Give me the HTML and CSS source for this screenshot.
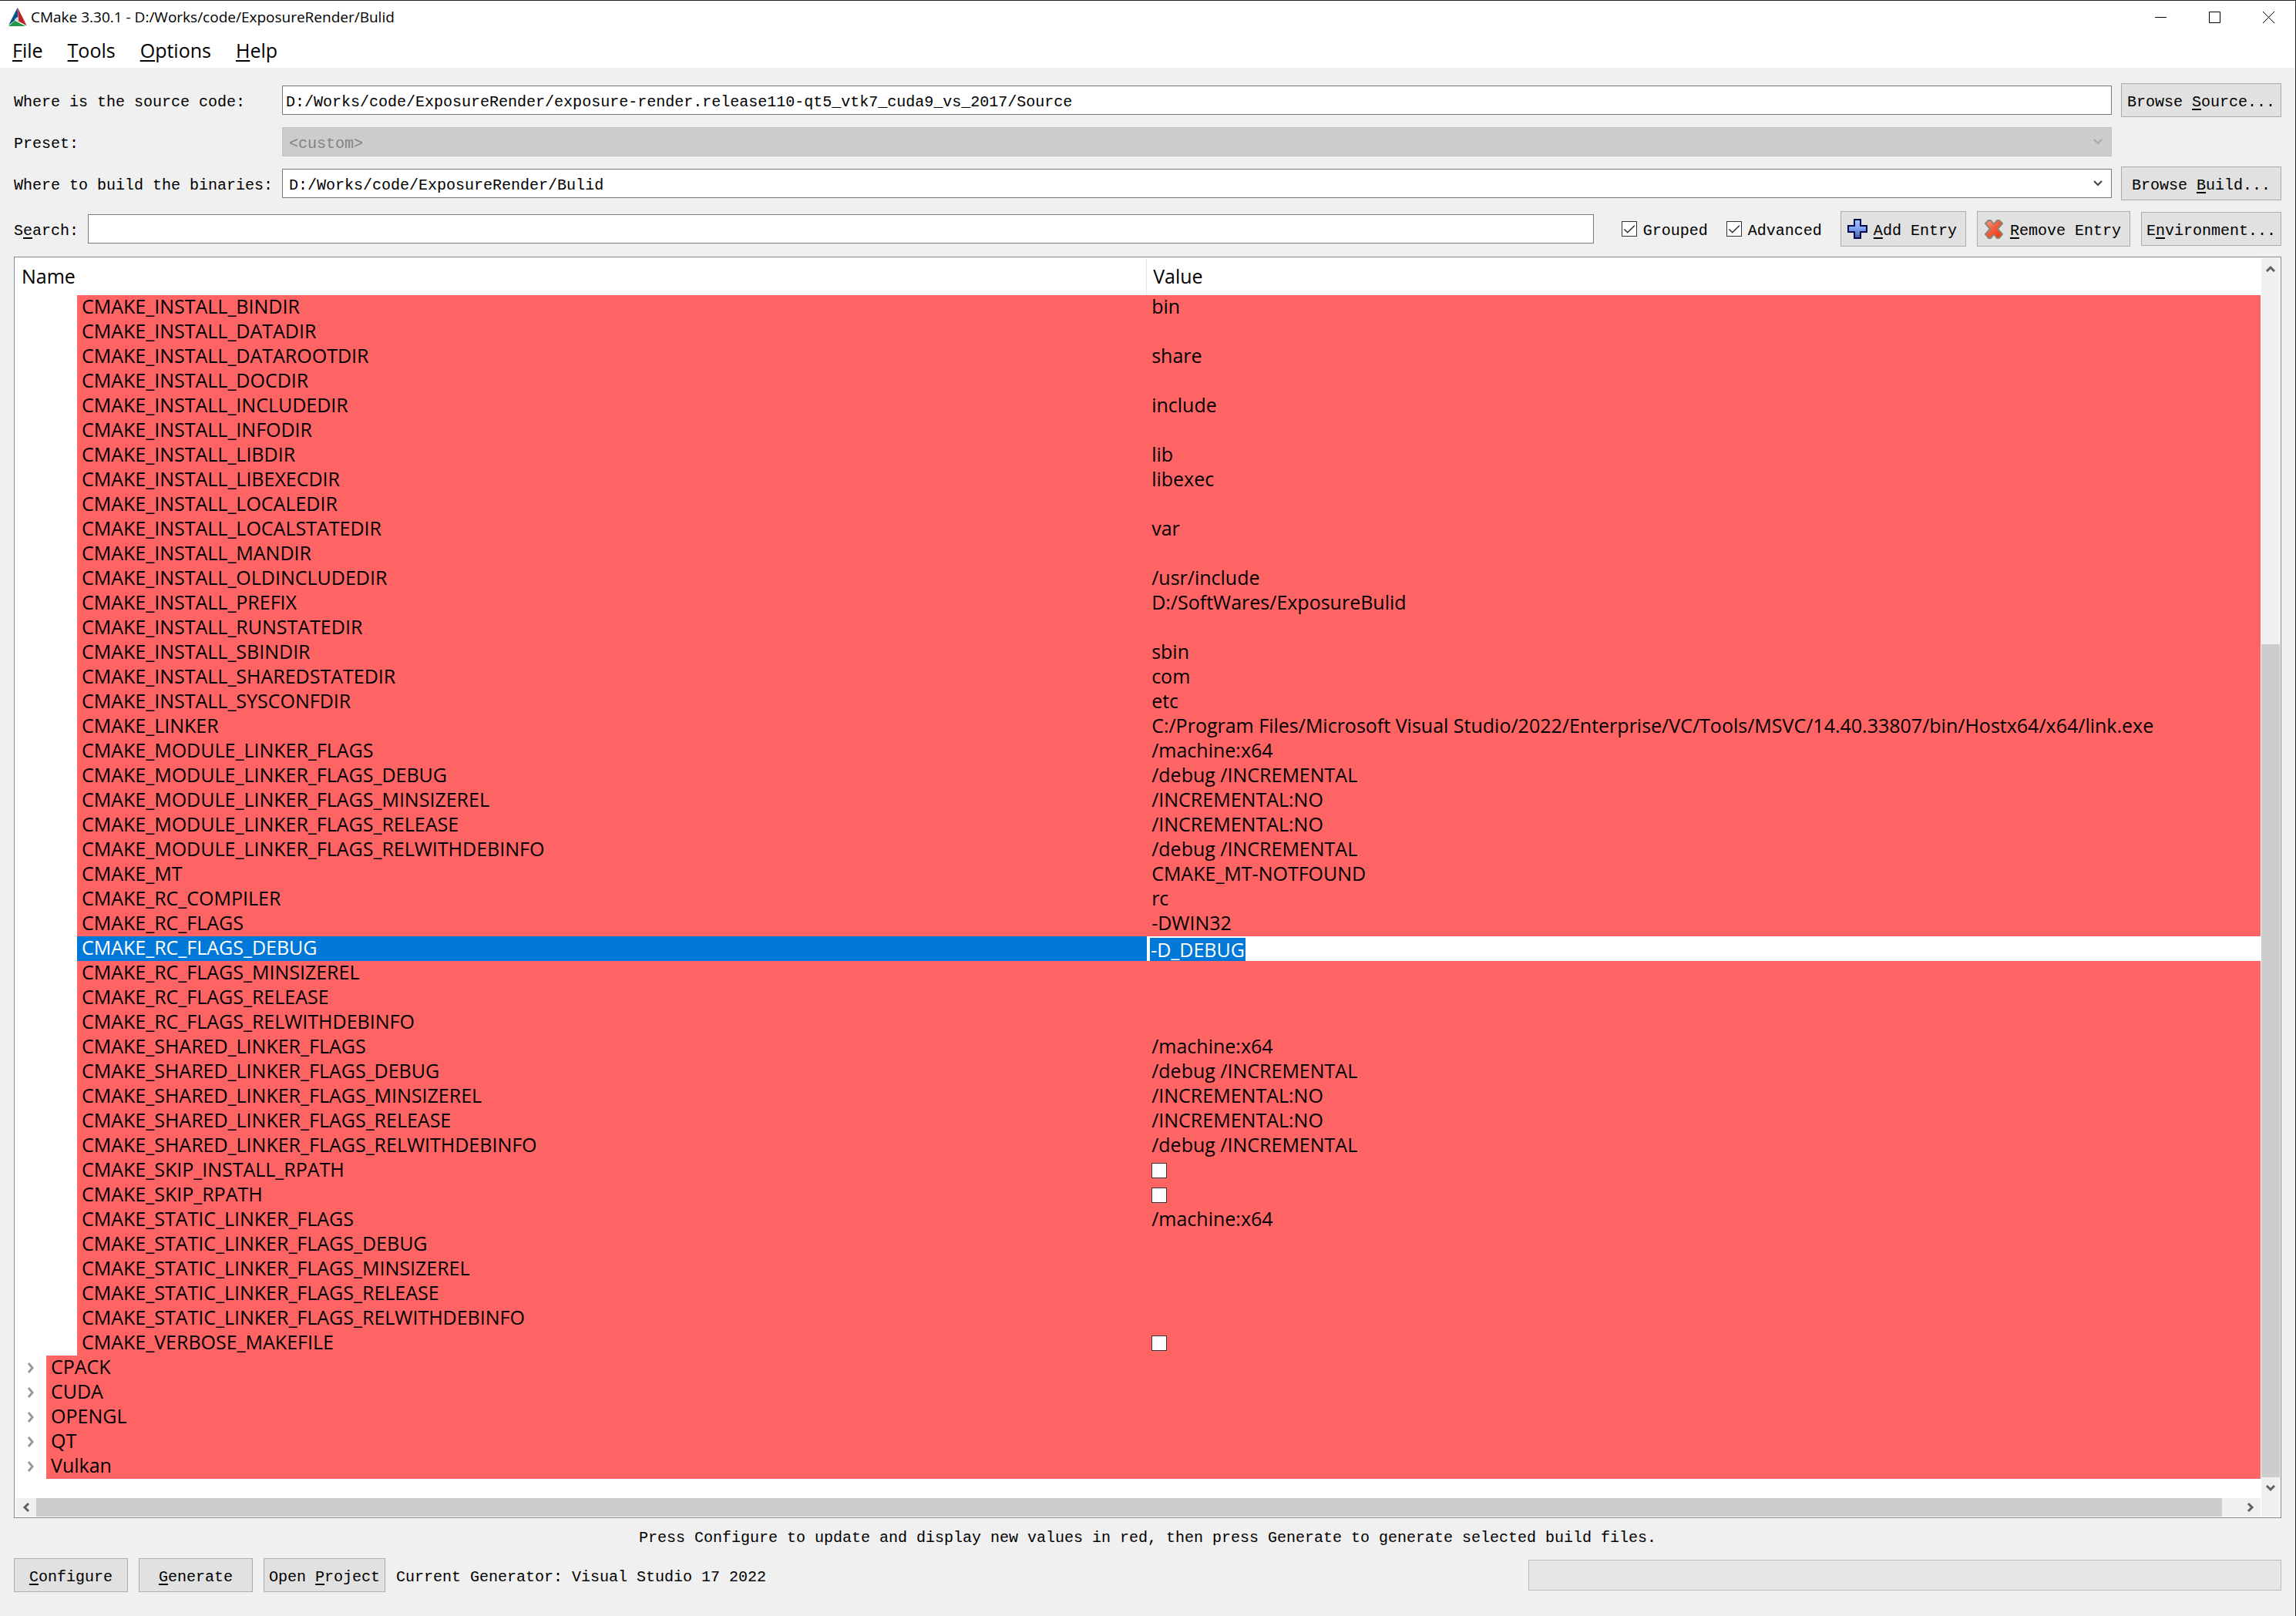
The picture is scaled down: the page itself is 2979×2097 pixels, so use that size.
FILE: index.html
```html
<!DOCTYPE html>
<html lang="en">
<head>
<meta charset="utf-8">
<title>CMake 3.30.1 - D:/Works/code/ExposureRender/Bulid</title>
<link rel="stylesheet" href="styles.css">
</head>
<body>
<header class="titlebar">
  <svg class="logo" viewBox="0 0 24 24" aria-hidden="true">
    <path fill="#064f8c" d="M11.6 0 12.4 13.2 0.2 22.6z"/>
    <path fill="#be2128" d="M11.9 0 23.8 23.6 13 17.6z"/>
    <path fill="#249847" d="M8.4 16.8 22.2 24H0z"/>
    <path fill="#d5d7dc" d="M12.3 11.6 13.6 19.2 8.2 16.8 8 15z"/>
  </svg>
  <h1 class="caption">CMake 3.30.1 - D:/Works/code/ExposureRender/Bulid</h1>
  <div class="window-controls">
    <button class="window-button" aria-label="Minimize"><svg viewBox="0 0 15 15"><path d="M0 7.5h15"/></svg></button>
    <button class="window-button" aria-label="Maximize"><svg viewBox="0 0 15 15"><path d="M.5.5h14v14H.5z"/></svg></button>
    <button class="window-button" aria-label="Close"><svg viewBox="0 0 15 15"><path d="M0 0l15 15M15 0L0 15"/></svg></button>
  </div>
</header>
<nav class="menubar">
  <button class="menu"><u>F</u>ile</button>
  <button class="menu"><u>T</u>ools</button>
  <button class="menu"><u>O</u>ptions</button>
  <button class="menu"><u>H</u>elp</button>
</nav>
<main class="content">
  <div class="paths">
    <label class="label" for="source">Where is the source code:</label>
    <input class="field" id="source" type="text" value="D:/Works/code/ExposureRender/exposure-render.release110-qt5_vtk7_cuda9_vs_2017/Source">
    <button class="button">Browse <u>S</u>ource...</button>

    <label class="label" for="preset">Preset:</label>
    <div class="combo">
      <select class="field" id="preset" disabled><option>&lt;custom&gt;</option></select>
      <svg class="combo-arrow" viewBox="0 0 12 8"><path d="M1 1l5 5 5-5"/></svg>
    </div>
    <span></span>

    <label class="label" for="binaries">Where to build the binaries:</label>
    <div class="combo">
      <select class="field" id="binaries"><option>D:/Works/code/ExposureRender/Bulid</option></select>
      <svg class="combo-arrow" viewBox="0 0 12 8"><path d="M1 1l5 5 5-5"/></svg>
    </div>
    <button class="button">Browse <u>B</u>uild...</button>
  </div>

  <div class="toolbar">
    <label class="label" for="search">S<u>e</u>arch:</label>
    <input class="field search" id="search" type="text">
    <div class="options">
      <label class="option"><input class="check" type="checkbox" checked><span class="label">Grouped</span></label>
      <label class="option"><input class="check" type="checkbox" checked><span class="label">Advanced</span></label>
    </div>
    <div class="actions">
      <button class="button with-icon">
        <svg class="icon" viewBox="0 0 26 26" aria-hidden="true">
          <defs><linearGradient id="blue" x2="0" y2="1"><stop offset="0" stop-color="#a4c8ff"/><stop offset=".45" stop-color="#84a8f4"/><stop offset="1" stop-color="#4058b0"/></linearGradient></defs>
          <path fill="url(#blue)" stroke="#04084c" stroke-width="2" d="M9 1h8v8h8v8h-8v8H9v-8H1V9h8z"/>
        </svg>
        <span><u>A</u>dd Entry</span>
      </button>
      <button class="button with-icon">
        <svg class="icon" viewBox="0 0 26 26" aria-hidden="true">
          <defs><linearGradient id="red" x2="1" y2="1"><stop offset="0" stop-color="#ff9c84"/><stop offset=".5" stop-color="#f4583c"/><stop offset="1" stop-color="#ff2c00"/></linearGradient></defs>
          <path fill="url(#red)" stroke="#8c8470" stroke-width="2" stroke-linejoin="round" d="M6 2h3l4 5 4-5h3l4 4-6 7 6 7-4 5h-3l-4-5-4 5H6l-4-5 6-7-6-7z"/>
        </svg>
        <span><u>R</u>emove Entry</span>
      </button>
      <button class="button">E<u>n</u>vironment...</button>
    </div>
  </div>

  <section class="tree">
    <div class="viewport">
      <table class="cache">
        <thead><tr><th class="name">Name</th><th>Value</th></tr></thead>
        <tbody>
          <tr><td><div class="entry">CMAKE_INSTALL_BINDIR</div></td><td>bin</td></tr>
          <tr><td><div class="entry">CMAKE_INSTALL_DATADIR</div></td><td></td></tr>
          <tr><td><div class="entry">CMAKE_INSTALL_DATAROOTDIR</div></td><td>share</td></tr>
          <tr><td><div class="entry">CMAKE_INSTALL_DOCDIR</div></td><td></td></tr>
          <tr><td><div class="entry">CMAKE_INSTALL_INCLUDEDIR</div></td><td>include</td></tr>
          <tr><td><div class="entry">CMAKE_INSTALL_INFODIR</div></td><td></td></tr>
          <tr><td><div class="entry">CMAKE_INSTALL_LIBDIR</div></td><td>lib</td></tr>
          <tr><td><div class="entry">CMAKE_INSTALL_LIBEXECDIR</div></td><td>libexec</td></tr>
          <tr><td><div class="entry">CMAKE_INSTALL_LOCALEDIR</div></td><td></td></tr>
          <tr><td><div class="entry">CMAKE_INSTALL_LOCALSTATEDIR</div></td><td>var</td></tr>
          <tr><td><div class="entry">CMAKE_INSTALL_MANDIR</div></td><td></td></tr>
          <tr><td><div class="entry">CMAKE_INSTALL_OLDINCLUDEDIR</div></td><td>/usr/include</td></tr>
          <tr><td><div class="entry">CMAKE_INSTALL_PREFIX</div></td><td>D:/SoftWares/ExposureBulid</td></tr>
          <tr><td><div class="entry">CMAKE_INSTALL_RUNSTATEDIR</div></td><td></td></tr>
          <tr><td><div class="entry">CMAKE_INSTALL_SBINDIR</div></td><td>sbin</td></tr>
          <tr><td><div class="entry">CMAKE_INSTALL_SHAREDSTATEDIR</div></td><td>com</td></tr>
          <tr><td><div class="entry">CMAKE_INSTALL_SYSCONFDIR</div></td><td>etc</td></tr>
          <tr><td><div class="entry">CMAKE_LINKER</div></td><td>C:/Program Files/Microsoft Visual Studio/2022/Enterprise/VC/Tools/MSVC/14.40.33807/bin/Hostx64/x64/link.exe</td></tr>
          <tr><td><div class="entry">CMAKE_MODULE_LINKER_FLAGS</div></td><td>/machine:x64</td></tr>
          <tr><td><div class="entry">CMAKE_MODULE_LINKER_FLAGS_DEBUG</div></td><td>/debug /INCREMENTAL</td></tr>
          <tr><td><div class="entry">CMAKE_MODULE_LINKER_FLAGS_MINSIZEREL</div></td><td>/INCREMENTAL:NO</td></tr>
          <tr><td><div class="entry">CMAKE_MODULE_LINKER_FLAGS_RELEASE</div></td><td>/INCREMENTAL:NO</td></tr>
          <tr><td><div class="entry">CMAKE_MODULE_LINKER_FLAGS_RELWITHDEBINFO</div></td><td>/debug /INCREMENTAL</td></tr>
          <tr><td><div class="entry">CMAKE_MT</div></td><td>CMAKE_MT-NOTFOUND</td></tr>
          <tr><td><div class="entry">CMAKE_RC_COMPILER</div></td><td>rc</td></tr>
          <tr><td><div class="entry">CMAKE_RC_FLAGS</div></td><td>-DWIN32</td></tr>
          <tr class="selected"><td><div class="entry">CMAKE_RC_FLAGS_DEBUG</div></td><td><input class="editor" type="text" value="-D_DEBUG" aria-label="CMAKE_RC_FLAGS_DEBUG"></td></tr>
          <tr><td><div class="entry">CMAKE_RC_FLAGS_MINSIZEREL</div></td><td></td></tr>
          <tr><td><div class="entry">CMAKE_RC_FLAGS_RELEASE</div></td><td></td></tr>
          <tr><td><div class="entry">CMAKE_RC_FLAGS_RELWITHDEBINFO</div></td><td></td></tr>
          <tr><td><div class="entry">CMAKE_SHARED_LINKER_FLAGS</div></td><td>/machine:x64</td></tr>
          <tr><td><div class="entry">CMAKE_SHARED_LINKER_FLAGS_DEBUG</div></td><td>/debug /INCREMENTAL</td></tr>
          <tr><td><div class="entry">CMAKE_SHARED_LINKER_FLAGS_MINSIZEREL</div></td><td>/INCREMENTAL:NO</td></tr>
          <tr><td><div class="entry">CMAKE_SHARED_LINKER_FLAGS_RELEASE</div></td><td>/INCREMENTAL:NO</td></tr>
          <tr><td><div class="entry">CMAKE_SHARED_LINKER_FLAGS_RELWITHDEBINFO</div></td><td>/debug /INCREMENTAL</td></tr>
          <tr><td><div class="entry">CMAKE_SKIP_INSTALL_RPATH</div></td><td><input class="check" type="checkbox" aria-label="CMAKE_SKIP_INSTALL_RPATH"></td></tr>
          <tr><td><div class="entry">CMAKE_SKIP_RPATH</div></td><td><input class="check" type="checkbox" aria-label="CMAKE_SKIP_RPATH"></td></tr>
          <tr><td><div class="entry">CMAKE_STATIC_LINKER_FLAGS</div></td><td>/machine:x64</td></tr>
          <tr><td><div class="entry">CMAKE_STATIC_LINKER_FLAGS_DEBUG</div></td><td></td></tr>
          <tr><td><div class="entry">CMAKE_STATIC_LINKER_FLAGS_MINSIZEREL</div></td><td></td></tr>
          <tr><td><div class="entry">CMAKE_STATIC_LINKER_FLAGS_RELEASE</div></td><td></td></tr>
          <tr><td><div class="entry">CMAKE_STATIC_LINKER_FLAGS_RELWITHDEBINFO</div></td><td></td></tr>
          <tr><td><div class="entry">CMAKE_VERBOSE_MAKEFILE</div></td><td><input class="check" type="checkbox" aria-label="CMAKE_VERBOSE_MAKEFILE"></td></tr>
          <tr><td><div class="group"><button class="twisty" aria-label="Expand CPACK"><svg viewBox="0 0 10 14"><path d="M2 1l5 6-5 6"/></svg></button><div class="entry">CPACK</div></div></td><td></td></tr>
          <tr><td><div class="group"><button class="twisty" aria-label="Expand CUDA"><svg viewBox="0 0 10 14"><path d="M2 1l5 6-5 6"/></svg></button><div class="entry">CUDA</div></div></td><td></td></tr>
          <tr><td><div class="group"><button class="twisty" aria-label="Expand OPENGL"><svg viewBox="0 0 10 14"><path d="M2 1l5 6-5 6"/></svg></button><div class="entry">OPENGL</div></div></td><td></td></tr>
          <tr><td><div class="group"><button class="twisty" aria-label="Expand QT"><svg viewBox="0 0 10 14"><path d="M2 1l5 6-5 6"/></svg></button><div class="entry">QT</div></div></td><td></td></tr>
          <tr><td><div class="group"><button class="twisty" aria-label="Expand Vulkan"><svg viewBox="0 0 10 14"><path d="M2 1l5 6-5 6"/></svg></button><div class="entry">Vulkan</div></div></td><td></td></tr>
        </tbody>
      </table>
    </div>
    <div class="scrollbar vertical">
      <button class="scroll-button" aria-label="Scroll up"><svg viewBox="0 0 14 10"><path d="M2 8l5-5 5 5"/></svg></button>
      <div class="track"><div class="thumb" style="height: 69.5%"></div></div>
      <button class="scroll-button" aria-label="Scroll down"><svg viewBox="0 0 14 10"><path d="M2 2l5 5 5-5"/></svg></button>
    </div>
    <div class="scrollbar horizontal">
      <button class="scroll-button" aria-label="Scroll left"><svg viewBox="0 0 10 14"><path d="M8 2L3 7l5 5"/></svg></button>
      <div class="track"><div class="thumb" style="width: 99.2%"></div></div>
      <button class="scroll-button" aria-label="Scroll right"><svg viewBox="0 0 10 14"><path d="M2 2l5 5-5 5"/></svg></button>
    </div>
    <div class="corner"></div>
  </section>

  <p class="hint">Press Configure to update and display new values in red, then press Generate to generate selected build files.</p>

  <footer class="footer">
    <div class="commands">
      <button class="button wide"><u>C</u>onfigure</button>
      <button class="button wide"><u>G</u>enerate</button>
      <button class="button">Open <u>P</u>roject</button>
      <span class="label">Current Generator: Visual Studio 17 2022</span>
    </div>
    <progress class="progress" value="0" max="100" aria-label="Progress"></progress>
  </footer>
</main>
</body>
</html>
```
FILE: styles.css
```css
:root {
  --ui: "Open Sans", "Noto Sans", sans-serif;
  --mono: "Liberation Mono", "Noto Sans CJK SC", monospace;
}

* { box-sizing: border-box; }

body {
  margin: 0;
  min-height: 100vh;
  display: flex;
  flex-direction: column;
  background: #f0f0f0;
  border-top: 1px solid #222;
  border-right: 1px solid #222;
  color: #000;
  font: 20px/24px var(--mono);
}

button, input, select {
  margin: 0;
  font: inherit;
  color: inherit;
  border-radius: 0;
}

u { text-underline-offset: 3px; text-decoration-thickness: 2px; }

/* Title bar and menus */
.titlebar {
  display: flex;
  align-items: center;
  height: 42px;
  padding-left: 11px;
  background: #fff;
}
.logo { width: 24px; height: 24px; }
.caption {
  flex: 1;
  margin: 0 0 0 5px;
  font: 19px/42px var(--ui);
}
.window-controls { display: flex; }
.window-button {
  display: grid;
  place-items: center;
  width: 70px;
  height: 42px;
  padding: 0;
  border: 0;
  background: none;
}
.window-button svg { width: 15px; height: 15px; fill: none; stroke: #000; }

.menubar {
  display: flex;
  gap: 32px;
  height: 45px;
  padding: 0 16px 2px;
  background: #fff;
}
.menu {
  padding: 0;
  border: 0;
  background: none;
  font: 25px/40px var(--ui);
}

/* Main area */
.content {
  flex: 1;
  display: flex;
  flex-direction: column;
  padding: 20px 18px 31px;
}
.label { padding-top: 5px; white-space: pre; }

.field {
  width: 100%;
  height: 38px;
  padding: 5px 4px 0;
  border: 1px solid #7a7a7a;
  background: #fff;
}
.button {
  height: 44px;
  padding: 5px 6px 0;
  border: 1px solid #adadad;
  background: #e1e1e1;
  white-space: pre;
}
.button.wide { width: 148px; }

.paths {
  display: grid;
  grid-template-columns: auto 1fr 208px;
  grid-auto-rows: 44px;
  align-items: center;
  gap: 10px 12px;
}
.combo { display: grid; align-items: center; }
.combo > * { grid-area: 1 / 1; }
.combo .field {
  appearance: none;
  padding-left: 8px;
  opacity: 1;
}
.combo .field:disabled {
  background: #ccc;
  border-color: #bfbfbf;
  color: #838383;
}
.combo-arrow {
  justify-self: end;
  width: 12px;
  height: 8px;
  margin-right: 12px;
  fill: none;
  stroke: #444;
  stroke-width: 2;
  pointer-events: none;
}
.field:disabled + .combo-arrow { stroke: #a8a8a8; }

/* Search and entry tools */
.toolbar {
  display: flex;
  align-items: center;
  gap: 12px;
  margin: 14px 0 13px;
}
.search { flex: 1; width: auto; }
.options { display: flex; gap: 24px; padding: 0 12px 0 24px; }
.option { display: flex; align-items: center; gap: 8px; }
.check {
  appearance: none;
  display: block;
  width: 20px;
  height: 20px;
  border: 1px solid #333;
  background: #fff;
}
.check:checked {
  background: #fff url("data:image/svg+xml,%3Csvg xmlns='http://www.w3.org/2000/svg' viewBox='0 0 18 18'%3E%3Cpath d='M2.5 9.5 6.7 13.7 15.8 4.8' fill='none' stroke='%23333' stroke-width='1.6'/%3E%3C/svg%3E");
}
.actions { display: flex; align-items: center; gap: 14px; }
.with-icon {
  display: flex;
  align-items: center;
  gap: 8px;
  height: 46px;
  padding: 0 11px 0 8px;
}
.with-icon span { padding-top: 5px; }
.icon { width: 26px; height: 26px; }

/* Cache entries */
.tree {
  flex: 1;
  display: grid;
  grid-template: 1fr 24px / 1fr 24px;
  column-gap: 1px;
  padding: 1px;
  border: 1px solid #828790;
  background: #fff;
}
.viewport { padding-bottom: 23px; }
.cache {
  width: 100%;
  table-layout: fixed;
  border-collapse: separate;
  border-spacing: 0;
  font: 25px/28px var(--ui);
  white-space: nowrap;
}
.cache th {
  height: 48px;
  padding: 0 6px 2px 8px;
  font-weight: 400;
  text-align: left;
}
.cache .name { width: 50.4%; border-right: 1px solid #e5e5e5; }
.cache td { height: 32px; padding: 0; vertical-align: top; }
.cache td + td { padding-left: 6px; background: #ff6464; }
.entry {
  flex: 1;
  height: 32px;
  margin-left: 80px;
  padding-left: 6px;
  background: #ff6464;
}
.group { display: flex; }
.group .entry { margin-left: 0; }
.twisty {
  display: grid;
  place-items: center;
  width: 40px;
  height: 32px;
  padding: 0;
  border: 0;
  background: none;
}
.twisty svg { width: 10px; height: 14px; fill: none; stroke: #999; stroke-width: 3; }
.cache .check { margin-top: 6px; }
.selected .entry { background: #0078d7; color: #fff; }
.cache .selected td + td { padding: 2px 0 0 4px; background: #fff; }
.editor {
  display: block;
  field-sizing: content;
  height: 30px;
  padding: 0 1px;
  border: 0;
  background: #0078d7;
  color: #fff;
}

/* Scroll bars */
.scrollbar { display: flex; background: #f0f0f0; }
.vertical { flex-direction: column; }
.track { flex: 1; display: flex; justify-content: flex-end; }
.vertical .track { flex-direction: column; }
.horizontal .track { justify-content: flex-start; }
.thumb { background: #cdcdcd; }
.scroll-button {
  display: grid;
  place-items: center;
  flex: 0 0 27px;
  padding: 0;
  border: 0;
  background: none;
}
.scroll-button svg { fill: none; stroke: #606060; stroke-width: 3; }
.vertical .scroll-button svg { width: 14px; height: 10px; }
.horizontal .scroll-button svg { width: 10px; height: 14px; }
.corner { background: #f0f0f0; }

/* Status and commands */
.hint { margin: 0; line-height: 52px; text-align: center; }
.footer {
  display: grid;
  grid-template-columns: 2fr 1fr;
  align-items: center;
  gap: 12px;
}
.commands { display: flex; align-items: center; gap: 14px; }
.progress {
  appearance: none;
  width: 100%;
  height: 40px;
  border: 1px solid #bcbcbc;
  background: #e6e6e6;
}
.progress::-webkit-progress-bar { background: #e6e6e6; }
```
